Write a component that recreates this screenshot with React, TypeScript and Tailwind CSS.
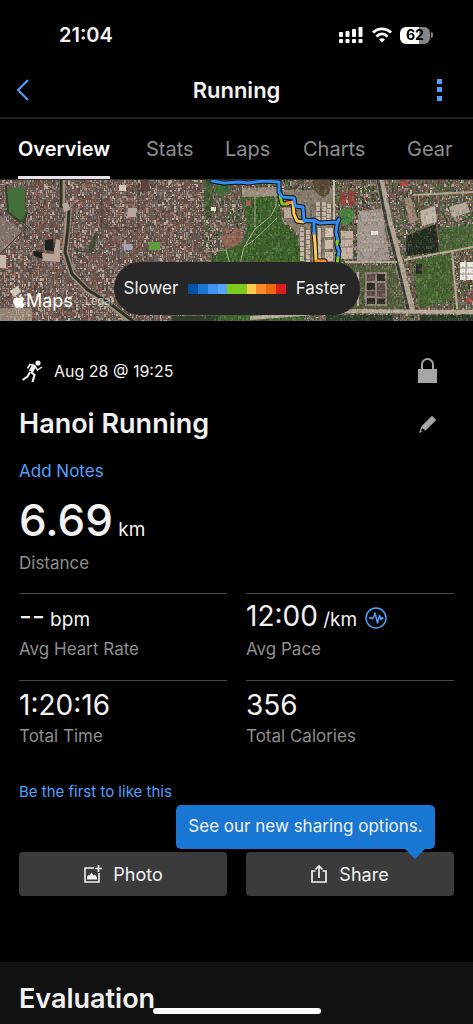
import type { ReactNode } from "react"
import { FaApple } from "react-icons/fa"

const tabs = ["Overview", "Stats", "Laps", "Charts", "Gear"]

const paceColors = [
  "bg-[#0050a5]",
  "bg-[#1976d2]",
  "bg-[#3f95f6]",
  "bg-[#55a6ff]",
  "bg-[#7fca1e]",
  "bg-[#7fca1e]",
  "bg-[#fdc94e]",
  "bg-[#fa8b28]",
  "bg-[#ee6810]",
  "bg-[#d9201f]",
]

const roofColors = ["#9d8478", "#7b6459", "#53463f", "#a5665b", "#8a8f90", "#b3a191", "#434539", "#8a5046", "#6f7675", "#cbbcac"]
const treeColors = ["#38572b", "#2e4726", "#4b6838", "#40612e"]
const fieldColors = ["#45702d", "#355a26", "#4f7739", "#2d4a22"]
const grainColors = ["#ffffff", "#000000", "#c8a48c"]

// Scatters small cells over an area and returns one path per colour
function scatter(colors: string[], x0: number, y0: number, x1: number, y1: number, density: number, start: number) {
  let seed = start
  const next = () => {
    seed = (seed * 1103515245 + 12345) % 2147483648
    return seed / 2147483648
  }
  const paths = colors.map(() => "")
  for (let y = y0; y < y1; y += 2) {
    for (let x = x0; x < x1; x += 2) {
      if (next() > density) continue
      const i = Math.floor(next() * colors.length)
      const w = 1 + Math.floor(next() * 2)
      const h = 1 + Math.floor(next() * 3)
      paths[i] += `M${x} ${y}h${w}v${h}h-${w}z`
    }
  }
  return paths
}

const city = scatter(roofColors, 0, 0, 473, 141, 0.86, 7)
const suburb = scatter(treeColors, 204, 0, 473, 141, 0.3, 91)
const meadow = scatter(fieldColors, 206, 14, 304, 141, 0.5, 33)
const grain = scatter(grainColors, 200, 0, 473, 141, 0.55, 58)

const routes = [
  { color: "#7fca1e", d: "M280 16l2 8h6" },
  { color: "#fa8b28", d: "M287 23l6-1" },
  { color: "#fdc94e", d: "M293 23l1 11 3 7 6 1" },
  { color: "#fdc94e", d: "M314 53l1 10 1 17" },
  { color: "#fa8b28", d: "M316 81h9" },
  { color: "#2f8df5", d: "M212 1l12 2 16-1 8 1 16-2 15 1v10l3 5 12 1 1 8 8 1 1 13 10 1v12M304 41l10-1 5 3 19-1 1-3-2 5-1 8 2 9" },
  { color: "#2f8df5", d: "M337 66l2 5-1 6" },
  { color: "#7fca1e", d: "M337 61v3M338 78l-1 6" },
]

function SatelliteMap() {
  return (
    <svg viewBox="0 0 473 141" preserveAspectRatio="xMidYMid slice" className="h-full w-full" aria-hidden="true">
      <defs>
        <clipPath id="meadow">
          <path d="M243 17h34l6 26 13 12 8 30v56h-98V88l14-18 22-6 6-18z" />
        </clipPath>
      </defs>
      <rect width="473" height="141" fill="#66554c" />
      {city.map((d, i) => (
        <path key={i} d={d} fill={roofColors[i]} opacity="0.8" />
      ))}
      {suburb.map((d, i) => (
        <path key={i} d={d} fill={treeColors[i]} />
      ))}

      {/* West side: park, canal and streets */}
      <path d="M8 8l17-1v26l-2 8-6-2-10-8z" fill="#426f3c" />
      <path d="M6 6l2 26 10 8 6 2 3-10" fill="none" stroke="#2f4527" strokeWidth="2" />
      <path d="M0 36l14 8 8 7-6 10-16 14z" fill="#8d807a" opacity="0.6" />
      <path d="M0 75h6v13H0z" fill="#c6b8a8" />
      <path d="M26 0v34l-9 13M28 46L0 74M7 32l21 17M102 0v52M138 2v42M103 48h35" fill="none" stroke="#4a3f39" strokeWidth="1" />
      <path d="M62 0v24l7 6-2 18-2 24 7 22 16 17 20 12 24 19" fill="none" stroke="#9b8d7b" strokeWidth="6" />
      <path d="M61 0v26l8 4-1 18-3 24 7 22 16 16 20 12 26 20" fill="none" stroke="#2d3325" strokeWidth="3" />
      <path d="M62 24l6-2 2 8-6 2z" fill="#b5a89b" />
      <path d="M45 60l8-1 1 12-9-1zM33 71l10 1 3 8-12-4z" fill="#1c211f" />
      <path d="M42 73l12 1 2-15 4 1v22l-17-1z" fill="#b8a496" />
      <path d="M10 111l8-5 3 6-7 5zM119 5h7v6h-7z" fill="#d2c6b7" />
      <path d="M0 128h32v13H0z" fill="#b0a090" opacity="0.6" />
      <path d="M141 0h7l2 11h-9z" fill="#5b423b" />
      <path d="M128 28h8v9h-9z" fill="#b5a99b" />
      <path d="M149 62h11v8h-11z" fill="#5e9c3f" />
      <path d="M123 64h9v6h-8z" fill="#a7a0b8" />
      <path d="M75 69l12 3 5-13 4-8 2 3-6 19-16-1z" fill="#34462c" opacity="0.8" />

      {/* Meadow in the middle */}
      <g clipPath="url(#meadow)">
        <rect x="200" y="10" width="110" height="131" fill="#3b602a" />
        {meadow.map((d, i) => (
          <path key={i} d={d} fill={fieldColors[i]} opacity="0.6" />
        ))}
      </g>
      <path d="M204 0l9 2v28l-6 10-3-14z" fill="#38562c" opacity="0.8" />
      <path d="M215 3h15v11h-15z" fill="#3e6b37" />
      <path d="M221 56l10-3 6-6 6 9-4 8-13 6z" fill="#8f6454" />
      <path d="M240 84l4-17 11-18 16-13 5-10v-12M255 17v30M245 66l8-5 24-23M206 72l20-2 4 14" fill="none" stroke="#aba58b" strokeWidth="1" />
      <path d="M211 27h5v4h-5z" fill="#ece4da" />
      <path d="M246 20h5v6h-5z" fill="#a5564b" />
      <path d="M242 8l36-1v9l-36 1z" fill="#a8988a" opacity="0.8" />

      {/* Housing estate */}
      <path d="M283 10h52v74h-31l-6-30-14-14z" fill="#85796a" />
      <path d="M302 47v37M308 50v34M318 22v20M324 22v20M329 24v18" fill="none" stroke="#c2b4a4" strokeWidth="4" strokeDasharray="4 1" />
      <path d="M305 47v37M311 30v54M321 22v62M332 24v60" fill="none" stroke="#55503f" strokeWidth="1" />
      <path d="M325 48h8v9h-8zM325 60h8v9h-8zM325 72h8v9h-8zM318 48h3v34h-3z" fill="#cdbcaa" />
      <path d="M284 28h10v10h-10z" fill="#b3a596" />
      <path d="M313 0h18l-2 14-6 4-9-8z" fill="#5a4a33" />
      <path d="M334 0v44" stroke="#c9beac" strokeWidth="2" />
      <path d="M348 11h7v13h-7zM340 12h6v12h-6z" fill="#8d4239" />
      <path d="M340 30l10-1 5 2-2 10-6 4-7-2z" fill="#4a8140" />
      <path d="M341 51h12v28h-12z" fill="#c1afa0" />
      <path d="M341 59h12M341 67h12" stroke="#776a5f" />
      <path d="M359 31l23-2 8 51-33 3v-32z" fill="#a0958c" />
      <path d="M362 34h18M362 40h20M361 62h24M361 70h25" stroke="#c4b8ad" strokeDasharray="2 1" />
      <path d="M371 51h7v4h-7z" fill="#e8e0d6" />

      {/* East side: rail line, pond and plots */}
      <path d="M380 0l8 40 11 43 13 50" fill="none" stroke="#b1a592" strokeWidth="8" />
      <path d="M378 0l8 40 11 43 12 50" fill="none" stroke="#383b33" strokeWidth="3" />
      <path d="M404 18h7l7 22-8 4z" fill="#9b8472" />
      <path d="M420 31l15-5 2 16-15 4z" fill="#bdb2a4" />
      <path d="M440 48l33-4v26l-33 3z" fill="#40632e" opacity="0.8" />
      <path d="M449 27l18-5 3 10-18 6z" fill="#b0a596" />
      <path d="M406 56l30-12 3 28-33 4z" fill="#252f21" />
      <path d="M416 80l35-7 2 48-33 7-6-25z" fill="#3e642b" opacity="0.85" />
      <path d="M404 80l69-13M452 70l5 58M473 12l-60 3" fill="none" stroke="#b2a791" strokeWidth="2" />
      <path d="M460 82h13v18h-13z" fill="#eeebe4" />
      <path d="M460 88h13M460 94h13M466 82v18" stroke="#8b8b82" />
      <path d="M400 1h8v5h-8zM466 118h6v5h-6z" fill="#a9453f" />
      <path d="M416 84h6v10h-6z" fill="#2c2f2b" />
      <path d="M345 85h50l10 44h-60z" fill="#4c5b36" opacity="0.7" />
      <path d="M345 82h52M358 92v34" fill="none" stroke="#b9ac98" strokeWidth="2" />
      <path d="M365 92h22v34h-22z" fill="#8b8073" />
      <path d="M367 94h8v7h-8zM377 103h8v14h-8zM367 111h8v5h-8zM377 118h8v1h-8z" fill="#614a4b" />
      <path d="M377 94h8v7h-8zM367 103h8v7h-8zM377 119h8v5h-8zM367 118h8v6h-8z" fill="#2d2e23" />
      <path d="M326 135h67v6h-67zM420 135h53v6h-53zM172 136h46v5h-46z" fill="#2e3d25" />
      <path d="M250 138l90-7 133 1" fill="none" stroke="#b6aa99" strokeWidth="4" />

      {grain.map((d, i) => (
        <path key={i} d={d} fill={grainColors[i]} opacity="0.13" />
      ))}

      <g fill="none" strokeLinejoin="round" strokeLinecap="round">
        {routes.map((route) => (
          <path key={route.d} d={route.d} stroke="#111" strokeWidth="5" />
        ))}
        {routes.map((route) => (
          <path key={route.d} d={route.d} stroke={route.color} strokeWidth="3" />
        ))}
      </g>
    </svg>
  )
}

function StatusIcons() {
  return (
    <div className="flex items-center gap-2">
      <svg width="26" height="18" viewBox="0 0 26 18" fill="#fff" aria-hidden="true">
        <rect x="1" y="6" width="4" height="5" rx="1" />
        <rect x="7.500" y="5" width="4" height="6" rx="1" />
        <rect x="14" y="3" width="4" height="8" rx="1" />
        <rect x="20.500" y="1" width="4" height="10" rx="1" />
        <rect x="1" y="13" width="4" height="4" rx="1" />
        <rect x="7.500" y="13" width="4" height="4" rx="1" />
        <rect x="14" y="13" width="4" height="4" rx="1" />
        <rect x="20.500" y="13" width="4" height="4" rx="1" />
      </svg>
      <svg width="20" height="16" viewBox="0 0 20 16" fill="none" stroke="#fff" strokeWidth="2.8" aria-hidden="true">
        <path d="M1 5.600C6.200.6 13.800.6 19 5.600" />
        <path d="M4.400 9.400c3.400-3.200 7.800-3.200 11.200 0" />
        <path d="M7 12.400c1.800-1.700 4.200-1.700 6 0l-3 3z" fill="#fff" stroke="none" />
      </svg>
      <div className="flex items-center gap-px">
        <span className="flex h-[17px] w-[30px] items-center justify-center rounded-[6px] bg-linear-to-r from-white from-62% to-[#858585] to-62% text-[14px] leading-none font-bold text-black">
          62
        </span>
        <span className="h-[6px] w-[2px] rounded-r-full bg-[#858585]" />
      </div>
    </div>
  )
}

interface MetricProps {
  label: string
  value: string
  unit?: string
  children?: ReactNode
}

function Metric({ label, value, unit, children }: MetricProps) {
  return (
    <div className="h-[87px] border-t border-[#484848] pt-[6px]">
      <dd className="flex h-9 items-center">
        <span className="text-[28px] leading-9">
          {value}
          {unit && <span className="text-[19px]"> {unit}</span>}
        </span>
        {children}
      </dd>
      <dt className="text-[17px] leading-[26px] text-[#8e8e8e]">{label}</dt>
    </div>
  )
}

export default function App() {
  return (
    <div className="flex min-h-screen flex-col bg-black font-['Inter',sans-serif] text-[#f2f2f2]">
      {/* Status bar */}
      <div className="flex h-[70px] items-center justify-between pr-10 pl-[59px]">
        <span className="text-[20px] font-semibold">21:04</span>
        <StatusIcons />
      </div>

      {/* Header */}
      <header className="grid h-[49px] grid-cols-[1fr_auto_1fr] items-center border-b-2 border-[#262326] px-4 pb-[7px]">
        <button type="button" aria-label="Back" className="justify-self-start">
          <svg width="13" height="22" viewBox="0 0 13 22" fill="none" stroke="#4da3ff" strokeWidth="2">
            <path d="M12 1L2 11l10 10" />
          </svg>
        </button>
        <h1 className="text-[22px] font-semibold">Running</h1>
        <button type="button" aria-label="More" className="justify-self-end pr-[14px]">
          <svg width="6" height="22" viewBox="0 0 6 22" fill="#4da3ff">
            <path d="M0 0h5v5H0zM0 8h5v5H0zM0 17h5v5H0z" />
          </svg>
        </button>
      </header>

      {/* Tabs */}
      <nav className="grid h-[61px] grid-cols-[128fr_79fr_78fr_104fr_66fr] border-b border-[#2f2f2f] pl-[18px] text-[20px]">
        {tabs.map((tab) => (
          <a
            key={tab}
            href={`#${tab.toLowerCase()}`}
            className={`flex items-center justify-self-start border-b-3 pt-[2px] ${
              tab === "Overview" ? "border-[#e6e1e6] font-semibold text-white" : "border-transparent text-[#8e8e8e]"
            }`}
          >
            {tab}
          </a>
        ))}
      </nav>

      {/* Map */}
      <div className="relative h-[141px] overflow-hidden">
        <SatelliteMap />
        <div className="absolute bottom-2 left-3 flex items-center text-white">
          <FaApple className="h-4 w-[14px]" />
          <span className="text-[18px] leading-6">Maps</span>
          <a href="#legal" className="ml-3 text-[11px] text-white/60">
            Legal
          </a>
        </div>
        <div className="absolute bottom-[6px] left-1/2 flex h-[53px] w-[246px] -translate-x-1/2 items-center justify-between rounded-full bg-[#262626] pr-[14px] pl-[10px] text-[17px]">
          <span>Slower</span>
          <div className="flex h-[10px] w-[97px]">
            {paceColors.map((color, i) => (
              <span key={i} className={`flex-1 ${color}`} />
            ))}
          </div>
          <span>Faster</span>
        </div>
      </div>

      <main className="px-[19px]">
        {/* Activity title */}
        <div className="mt-[30px] flex h-10 items-center justify-between pr-4">
          <div className="flex items-center gap-[10px] pl-[3px]">
            <svg width="22" height="23" viewBox="0 0 22 23" fill="none" stroke="#f2f2f2" aria-hidden="true">
              <circle cx="16" cy="3" r="2.6" fill="#f2f2f2" stroke="none" />
              <path d="M5.500 8.500L8 4.500l4.500 1" strokeWidth="1.600" />
              <path d="M12.500 5L9 11.500" strokeWidth="4.600" />
              <path d="M13.500 7l2 3 4.500-3" strokeWidth="1.500" />
              <path d="M8 12l-2.500 4.500L.5 20" strokeWidth="2" />
              <path d="M9 12l3.500 3-2 7" strokeWidth="2.200" />
            </svg>
            <span className="text-[16px]">Aug 28 @ 19:25</span>
          </div>
          <button type="button" aria-label="Privacy">
            <svg width="21" height="26" viewBox="0 0 21 26">
              <path d="M1 11h19v14H1z" fill="#a6a6a6" />
              <path d="M5 12V6.500a5.500 5.500 0 0 1 11 0V12" fill="none" stroke="#a6a6a6" strokeWidth="2" />
            </svg>
          </button>
        </div>
        <div className="mt-[13px] flex h-10 items-center justify-between pr-[17px]">
          <h2 className="text-[27px] font-semibold">Hanoi Running</h2>
          <button type="button" aria-label="Edit title">
            <svg width="19" height="19" viewBox="0 0 19 19" fill="#a6a6a6">
              <path
                d="M14 .8L18.200 5 7.500 15.500 1 18 3.500 11.300zM4.300 13l-1.200 2.800 1 .9 2.800-1.100-.6-1.300-1.400-.2z"
                fillRule="evenodd"
              />
            </svg>
          </button>
        </div>
        <button type="button" className="mt-3 block h-8 text-[17px] text-[#4da3ff]">
          Add Notes
        </button>

        {/* Metrics */}
        <dl>
          <div className="mt-3 h-[93px]">
            <dd className="text-[44px] leading-10 font-medium">
              6.69<span className="text-[19px] font-normal"> km</span>
            </dd>
            <dt className="text-[17px] leading-[26px] text-[#8e8e8e]">Distance</dt>
          </div>
          <div className="grid grid-cols-2 gap-x-[19px]">
            <Metric label="Avg Heart Rate" value="--" unit="bpm" />
            <Metric label="Avg Pace" value="12:00" unit="/km">
              <button type="button" aria-label="Pace details" className="ml-2">
                <svg width="22" height="22" viewBox="0 0 22 22" fill="none" stroke="#4da3ff" strokeWidth="1.500" strokeLinejoin="round">
                  <circle cx="11" cy="11" r="10" />
                  <path d="M4 11.500l2-1 1.500 1.500L9 9l1-3 2.500 10 2-7.500 1.500 4 1-2 1 1.500" />
                </svg>
              </button>
            </Metric>
            <Metric label="Total Time" value="1:20:16" />
            <Metric label="Total Calories" value="356" />
          </div>
        </dl>

        <button type="button" className="mt-[13px] block h-6 text-[15px] text-[#4da3ff]">
          Be the first to like this
        </button>

        {/* Actions */}
        <div className="relative mt-12 grid grid-cols-2 gap-[19px]">
          <button type="button" className="flex h-11 items-center justify-center gap-[10px] rounded-[4px] bg-[#3b3b3b] text-[18px]">
            <svg width="20" height="20" viewBox="0 0 20 20" fill="none" stroke="#f2f2f2" strokeWidth="1.600" aria-hidden="true">
              <path d="M11 4H2v14h14V9M15.500 1v7M12 4.500h7" />
              <path d="M4 15.500v-3l1.500-1.500 1 .5 2-3 2 3 1.500-1 2 3v2z" fill="#f2f2f2" stroke="none" />
            </svg>
            Photo
          </button>
          <button type="button" className="flex h-11 items-center justify-center gap-3 rounded-[4px] bg-[#3b3b3b] text-[18px]">
            <svg width="16" height="20" viewBox="0 0 16 20" fill="none" stroke="#f2f2f2" strokeWidth="1.700" aria-hidden="true">
              <path d="M4.500 7H1v11h14V7h-3.500M8 14V2M4.500 5.500L8 2l3.500 3.500" />
            </svg>
            Share
          </button>
          <div role="tooltip" className="absolute right-[19px] bottom-[47px] flex h-11 w-[259px] items-center justify-center rounded-[5px] bg-[#1976d2] text-[17px] whitespace-nowrap">
            See our new sharing options.
            <svg width="20" height="10" viewBox="0 0 20 10" className="absolute top-full right-[10px]" aria-hidden="true">
              <path d="M0 0h20L10 10z" fill="#1976d2" />
            </svg>
          </div>
        </div>
      </main>

      {/* Evaluation */}
      <section className="mt-[66px] flex-1 bg-[#111] px-[19px] pt-[19px]">
        <h2 className="text-[27px] leading-9 font-semibold">Evaluation</h2>
      </section>

      <div className="fixed bottom-[10px] left-1/2 h-[6px] w-[168px] -translate-x-1/2 rounded-full bg-white" />
    </div>
  )
}
